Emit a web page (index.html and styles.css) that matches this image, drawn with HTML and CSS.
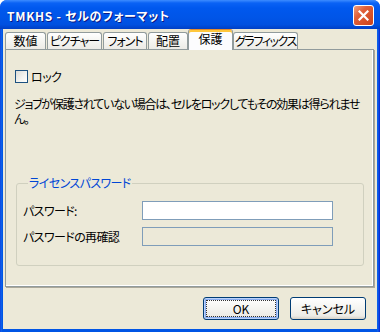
FILE: index.html
```html
<!DOCTYPE html>
<html lang="ja">
<head>
    <meta charset="UTF-8">
    <title>TMKHS - セルのフォーマット</title>
    <link rel="stylesheet" href="styles.css">
</head>
<body>
    <div class="window">
        <div class="titlebar">
            <span class="title">TMKHS - セルのフォーマット</span>
            <span class="close">
                <svg width="11" height="11" viewBox="0 0 11 11">
                    <path d="M1.5 1.5 L9.5 9.5 M9.5 1.5 L1.5 9.5" stroke="#fff" stroke-width="2.2" stroke-linecap="square"/>
                </svg>
            </span>
        </div>

        <div class="client">
            <div class="tabs">
                <div class="tab">数値</div>
                <div class="tab">ピクチャー</div>
                <div class="tab">フォント</div>
                <div class="tab">配置</div>
                <div class="tab active">保護</div>
                <div class="tab">グラフィックス</div>
            </div>

            <div class="panel">
                <label class="check"><span class="box"></span>ロック</label>
                <p class="note">ジョブが保護されていない場合は、セルをロックしてもその効果は得られませ<br>ん。</p>

                <fieldset class="group">
                    <legend>ライセンスパスワード</legend>
                    <div class="field">
                        <span class="field-label">パスワード:</span>
                        <span class="input"></span>
                    </div>
                    <div class="field">
                        <span class="field-label">パスワードの再確認</span>
                        <span class="input disabled"></span>
                    </div>
                </fieldset>
            </div>

            <div class="buttons">
                <button class="btn default"><span class="focus">OK</span></button>
                <button class="btn">キャンセル</button>
            </div>
        </div>
    </div>
</body>
</html>
```

FILE: styles.css
```css
* {
    margin: 0;
    padding: 0;
    box-sizing: border-box;
}

body {
    font-family: "Noto Sans CJK JP", "Liberation Sans", sans-serif;
    font-size: 12px;
    font-feature-settings: "palt";
    color: #000;
    background: #fff;
}

.window {
    width: 380px;
    height: 332px;
    display: flex;
    flex-direction: column;
    padding: 0 3px 3px;
    background: linear-gradient(90deg, #0831d9 0, #166aee 1px, #0055e5 2px, #0055e5 377px, #166aee 378px, #0831d9 379px);
    border-radius: 7px 7px 0 0;
}

.titlebar {
    height: 29px;
    margin: 0 -3px;
    padding: 2px 6px 0 7px;
    display: flex;
    align-items: center;
    justify-content: space-between;
    border-radius: 7px 7px 0 0;
    background: linear-gradient(180deg, #3d8cff 0, #0a62f5 3px, #0058ee 8px, #0055e8 60%, #0050e0 85%, #003fc4 100%);
}

.title {
    color: #fff;
    font-weight: bold;
    font-size: 12px;
    letter-spacing: 0.7px;
    text-shadow: 1px 1px 0 #0a1883;
}

.close {
    width: 21px;
    height: 21px;
    display: flex;
    align-items: center;
    justify-content: center;
    border: 1px solid #fff;
    border-radius: 3px;
    background: linear-gradient(135deg, #f0a080 0%, #e0603a 35%, #cc4219 100%);
}

.client {
    flex: 1;
    background: #ece9d8;
    padding: 0 3px 0 2px;
}

.tabs {
    height: 20px;
    display: flex;
    align-items: flex-end;
    position: relative;
    z-index: 1;
}

.tab {
    height: 17px;
    line-height: 16px;
    text-align: center;
    white-space: nowrap;
    overflow: hidden;
    letter-spacing: -1px;
    border: 1px solid #919b9c;
    border-bottom: none;
    border-radius: 3px 3px 0 0;
    background: linear-gradient(180deg, #fff 0%, #f7f7f4 40%, #ecebe6 100%);
    margin-left: 1px;
}

.tab:nth-child(1) { width: 41px; margin-left: 0; letter-spacing: 0; }
.tab:nth-child(2) { width: 55px; }
.tab:nth-child(3) { width: 44px; }
.tab:nth-child(4) { width: 40px; letter-spacing: 0; }
.tab:nth-child(5) { width: 45px; margin-left: 0; }
.tab:nth-child(6) { width: 65px; margin-left: 0; letter-spacing: -1.4px; }

.tab.active {
    height: 21px;
    line-height: 18px;
    margin-bottom: -1px;
    letter-spacing: 0;
    background: #fcfcfe;
    border-top: 1px solid #e68b2c;
    box-shadow: inset 0 2px 0 #ffc73c;
}

.panel {
    height: 238px;
    border: 1px solid #919b9c;
    box-shadow: inset -1px -1px 0 #fff, 1px 1px 0 #aca899;
    padding: 20px 0 0 9px;
}

.check {
    display: flex;
    align-items: center;
    gap: 3px;
    height: 13px;
    letter-spacing: -0.5px;
}

.box {
    width: 13px;
    height: 13px;
    border: 1px solid #1c5180;
    background: linear-gradient(135deg, #dcdcd7 0%, #f4f4f0 60%, #fff 100%);
}

.note {
    margin: 13px 0 0 -1px;
    line-height: 15px;
    white-space: nowrap;
    letter-spacing: -1.25px;
}

.group {
    width: 348px;
    height: 90px;
    margin: 50px 0 0 1px;
    border: 1px solid #d0d0bf;
    border-radius: 3px;
    padding: 4px 6px 0;
}

.group legend {
    margin-left: 5px;
    padding: 0 1px;
    color: #0046d5;
    line-height: 14px;
    letter-spacing: -0.6px;
}

.field {
    display: flex;
    align-items: center;
    margin-top: 7px;
    letter-spacing: -0.6px;
}

.field-label {
    width: 119px;
}

.input {
    width: 191px;
    height: 19px;
    border: 1px solid #7f9db9;
    background: #fff;
}

.input.disabled {
    background: #ece9d8;
}

.buttons {
    display: flex;
    justify-content: flex-end;
    gap: 11px;
    margin: 10px 8px 0 0;
}

.btn {
    width: 76px;
    height: 23px;
    font: inherit;
    color: #000;
    border: 1px solid #003c74;
    border-radius: 3px;
    background: linear-gradient(180deg, #fff 0%, #f4f4f0 50%, #ecebe6 85%, #d6d0c5 100%);
    display: flex;
    align-items: center;
    justify-content: center;
}

.btn.default {
    box-shadow: inset 0 0 0 1px #b9d1fa, inset 0 0 0 2px #89adf0;
    padding: 3px;
}

.focus {
    width: 100%;
    height: 100%;
    display: flex;
    align-items: center;
    justify-content: center;
    outline: 1px dotted #333;
}
```
